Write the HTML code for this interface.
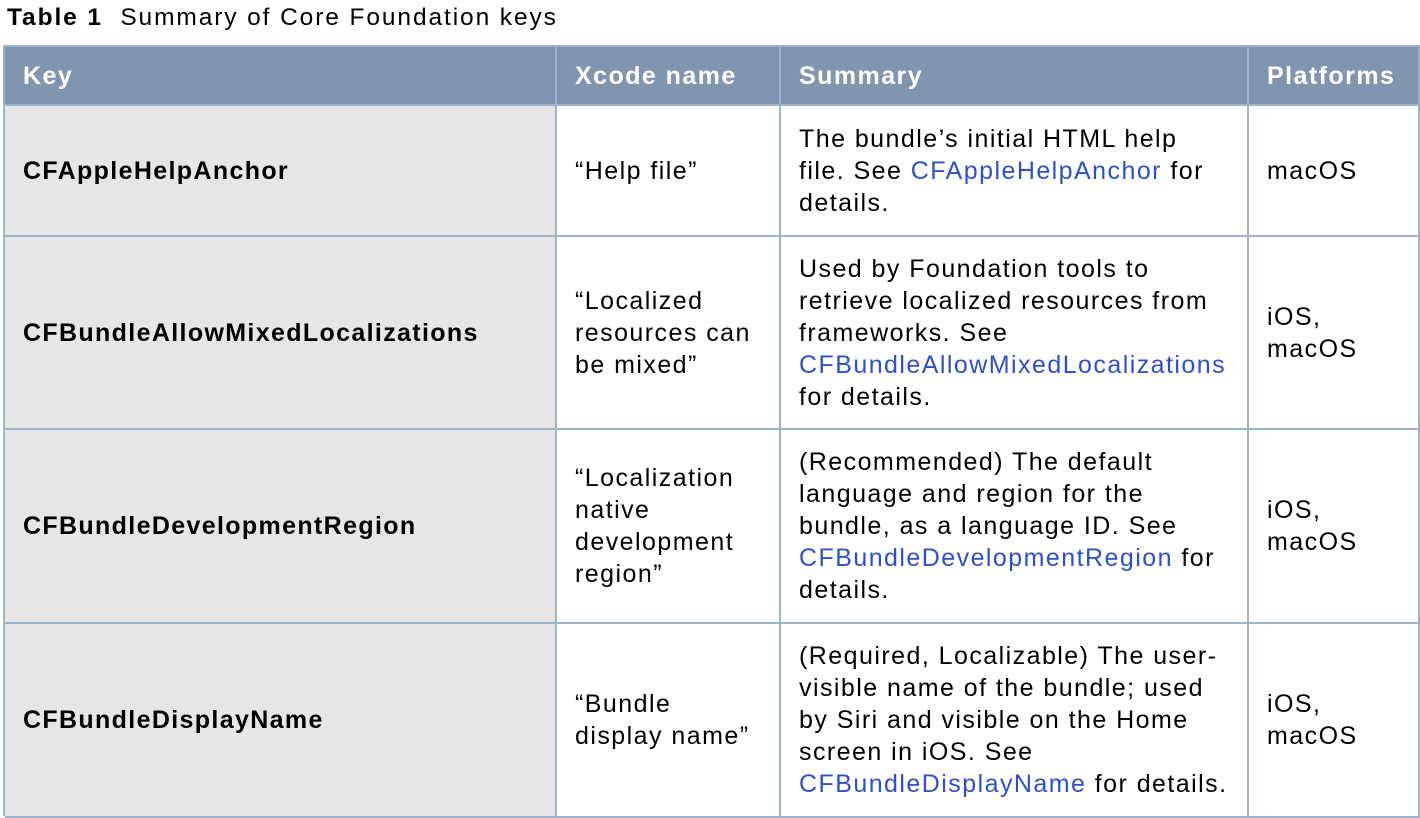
<!DOCTYPE html>
<html><head><meta charset="utf-8"><style>
body{margin:0;width:1420px;height:816px;overflow:hidden;background:#fff;font-family:"Liberation Sans",sans-serif;color:#000}
.t{position:absolute;left:7px;top:4px;font-size:24.5px;letter-spacing:1.9px;white-space:nowrap}
.c{position:absolute;box-sizing:border-box;display:flex;align-items:center;padding:0 18px;font-size:25px;letter-spacing:1.45px;line-height:32px;white-space:nowrap;border-right:2px solid #9db3cc;border-bottom:2px solid #9db3cc}
.h{background:#8095b0;color:#fff;font-weight:bold;}
.k{background:#e6e6e6;font-weight:bold;letter-spacing:1.35px}
a{color:#2d50c8;text-decoration:none}
</style></head><body>
<div class="t"><b>Table 1</b>&nbsp; Summary of Core Foundation keys</div>
<div style="position:absolute;left:4px;top:45px;width:1416px;height:2px;background:#9db3cc"></div>
<div style="position:absolute;left:3px;top:45px;width:2px;height:771px;background:#9db3cc"></div>

<div class="c h" style="left:5px;top:47px;width:552px;height:59px;padding-left:18px">Key</div>
<div class="c h" style="left:557px;top:47px;width:224px;height:59px">Xcode name</div>
<div class="c h" style="left:781px;top:47px;width:468px;height:59px">Summary</div>
<div class="c h" style="left:1249px;top:47px;width:171px;height:59px">Platforms</div>

<div class="c k" style="left:5px;top:106px;width:552px;height:131px">CFAppleHelpAnchor</div>
<div class="c" style="left:557px;top:106px;width:224px;height:131px">“Help file”</div>
<div class="c" style="left:781px;top:106px;width:468px;height:131px"><div>The bundle’s initial HTML help<br>file. See <a>CFAppleHelpAnchor</a> for<br>details.</div></div>
<div class="c" style="left:1249px;top:106px;width:171px;height:131px">macOS</div>

<div class="c k" style="left:5px;top:237px;width:552px;height:193px">CFBundleAllowMixedLocalizations</div>
<div class="c" style="left:557px;top:237px;width:224px;height:193px"><div>“Localized<br>resources can<br>be mixed”</div></div>
<div class="c" style="left:781px;top:237px;width:468px;height:193px"><div>Used by Foundation tools to<br>retrieve localized resources from<br>frameworks. See<br><a>CFBundleAllowMixedLocalizations</a><br>for details.</div></div>
<div class="c" style="left:1249px;top:237px;width:171px;height:193px"><div>iOS,<br>macOS</div></div>

<div class="c k" style="left:5px;top:430px;width:552px;height:194px">CFBundleDevelopmentRegion</div>
<div class="c" style="left:557px;top:430px;width:224px;height:194px"><div>“Localization<br>native<br>development<br>region”</div></div>
<div class="c" style="left:781px;top:430px;width:468px;height:194px"><div>(Recommended) The default<br>language and region for the<br>bundle, as a language ID. See<br><a>CFBundleDevelopmentRegion</a> for<br>details.</div></div>
<div class="c" style="left:1249px;top:430px;width:171px;height:194px"><div>iOS,<br>macOS</div></div>

<div class="c k" style="left:5px;top:624px;width:552px;height:194px">CFBundleDisplayName</div>
<div class="c" style="left:557px;top:624px;width:224px;height:194px"><div>“Bundle<br>display name”</div></div>
<div class="c" style="left:781px;top:624px;width:468px;height:194px"><div>(Required, Localizable) The user-<br>visible name of the bundle; used<br>by Siri and visible on the Home<br>screen in iOS. See<br><a>CFBundleDisplayName</a> for details.</div></div>
<div class="c" style="left:1249px;top:624px;width:171px;height:194px"><div>iOS,<br>macOS</div></div>
</body></html>
